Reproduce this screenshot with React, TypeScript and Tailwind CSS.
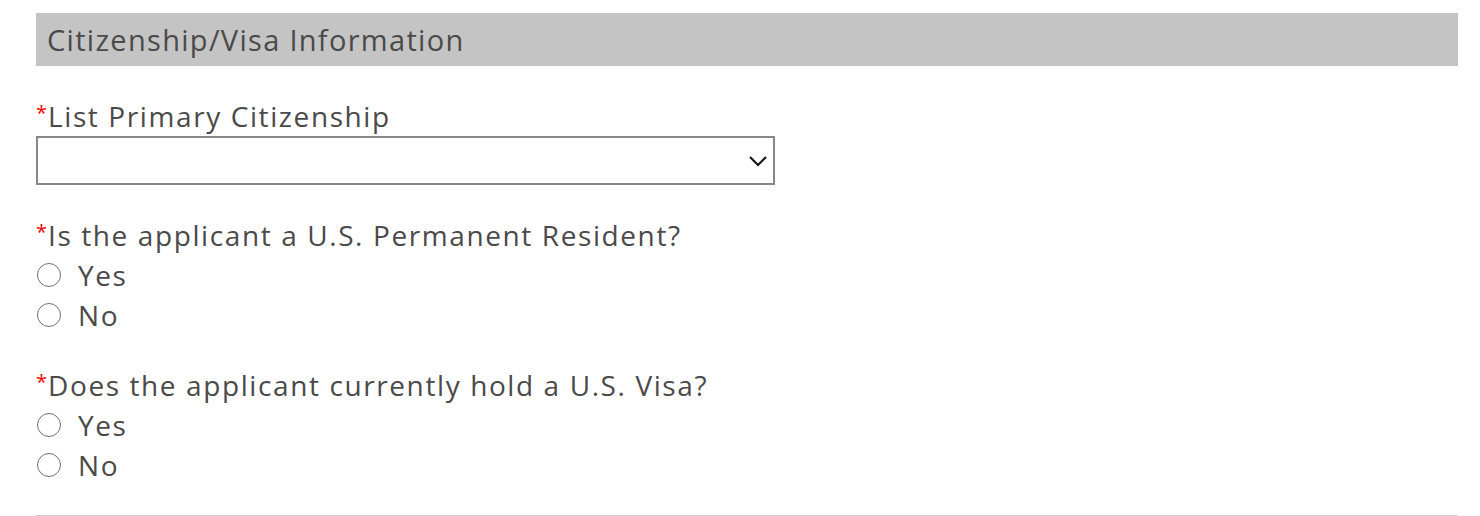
import React from 'react';

function Required({ children }: { children: React.ReactNode }) {
  return (
    <div className="h-[38px] flex items-center text-[28px] tracking-[1.6px] text-[#4a4a4a]">
      <span className="self-start mt-[5px] mr-[1px] text-[20px] leading-none tracking-normal text-[#f00000]">*</span>
      <span className="-mt-[2px]">{children}</span>
    </div>
  );
}

function Radio({ label, name }: { label: string; name: string }) {
  return (
    <label className="h-[40px] flex items-center text-[28px] tracking-[1.6px] text-[#4a4a4a]">
      <span className="ml-[1px] size-[24px] rounded-full border-[1.5px] border-[#6e6e6e] bg-white" />
      <input type="radio" name={name} className="hidden" />
      <span className="ml-[17px]">{label}</span>
    </label>
  );
}

export default function App() {
  return (
    <div
      className="pt-[13px] pl-9 pr-[22px] bg-white"
      style={{ fontFamily: '"Open Sans", Lato, sans-serif' }}
    >
      <div className="h-[53px] bg-[#c4c4c4] pl-[11px] flex items-center text-[29px] tracking-[1.3px] text-[#4a4a4a]">
        Citizenship/Visa Information
      </div>

      <div className="mt-8">
        <Required>List Primary Citizenship</Required>
        <div className="w-[739px] h-[49px] border-2 border-[#888] bg-white flex items-center justify-end pr-[5px]">
          <svg width="20" height="12" viewBox="0 0 20 12" fill="none">
            <path d="M2 2l8 8 8-8" stroke="#111" strokeWidth="2" />
          </svg>
        </div>
      </div>

      <div className="mt-8">
        <Required>Is the applicant a U.S. Permanent Resident?</Required>
        <Radio label="Yes" name="pr" />
        <Radio label="No" name="pr" />
      </div>

      <div className="mt-8">
        <Required>Does the applicant currently hold a U.S. Visa?</Required>
        <Radio label="Yes" name="visa" />
        <Radio label="No" name="visa" />
      </div>

      <div className="mt-[30px] border-t border-[#cccccc] h-[4px]" />
    </div>
  );
}
